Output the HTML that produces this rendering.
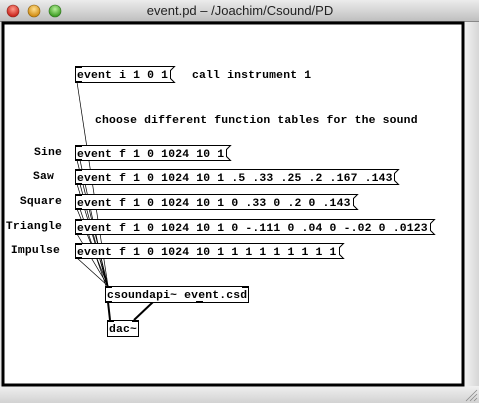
<!DOCTYPE html>
<html><head><style>
html,body{margin:0;padding:0;width:479px;height:403px;overflow:hidden;background:#e4e4e4}
svg{display:block}
.t{font-family:"Liberation Mono",monospace;font-weight:bold;font-size:11.4px;letter-spacing:0.18px;fill:#000}
</style></head><body>
<svg width="479" height="403" xmlns="http://www.w3.org/2000/svg">
<defs>
<linearGradient id="tb" x1="0" y1="0" x2="0" y2="1"><stop offset="0" stop-color="#ececec"/><stop offset="1" stop-color="#bdbdbd"/></linearGradient>
<linearGradient id="rs" x1="0" y1="0" x2="1" y2="0"><stop offset="0" stop-color="#f4f4f4"/><stop offset="1" stop-color="#d6d6d6"/></linearGradient>
<linearGradient id="bb" x1="0" y1="0" x2="0" y2="1"><stop offset="0" stop-color="#f0f0f0"/><stop offset="1" stop-color="#d2d2d2"/></linearGradient>
<radialGradient id="r" cx=".5" cy=".35" r=".6"><stop offset="0" stop-color="#ff9a8a"/><stop offset="1" stop-color="#c8201a"/></radialGradient>
<radialGradient id="y" cx=".5" cy=".35" r=".6"><stop offset="0" stop-color="#ffe090"/><stop offset="1" stop-color="#d08a10"/></radialGradient>
<radialGradient id="g" cx=".5" cy=".35" r=".6"><stop offset="0" stop-color="#b8f09a"/><stop offset="1" stop-color="#3a9a20"/></radialGradient>
</defs>
<rect x="0" y="0" width="479" height="22" fill="url(#tb)"/>
<line x1="0" y1="21.5" x2="479" y2="21.5" stroke="#888"/>
<circle cx="13" cy="11" r="6" fill="url(#r)" stroke="#8a2a20" stroke-width=".6"/>
<circle cx="34" cy="11" r="6" fill="url(#y)" stroke="#8a6010" stroke-width=".6"/>
<circle cx="55" cy="11" r="6" fill="url(#g)" stroke="#307020" stroke-width=".6"/>
<text x="240" y="15" text-anchor="middle" font-family="Liberation Sans,sans-serif" font-size="13" fill="#222">event.pd  – /Joachim/Csound/PD</text>
<rect x="464" y="22" width="15" height="364" fill="url(#rs)"/>
<rect x="0" y="386" width="479" height="17" fill="url(#bb)"/>
<rect x="3" y="23" width="460" height="362" fill="#fff" stroke="#000" stroke-width="3"/>
<g stroke="#000" stroke-width="0.7" fill="none">
<line x1="77" y1="82" x2="108" y2="286"/>
<line x1="77" y1="160" x2="108" y2="286"/>
<line x1="77" y1="184" x2="108" y2="286"/>
<line x1="77" y1="209" x2="108" y2="286"/>
<line x1="77" y1="234" x2="108" y2="286"/>
<line x1="77" y1="258" x2="108" y2="286"/>
<line x1="80" y1="160" x2="107" y2="286"/>
<line x1="80" y1="184" x2="107" y2="286"/>
<line x1="80" y1="209" x2="106" y2="286"/>
</g>
<g stroke="#000" stroke-width="2">
<line x1="108" y1="302" x2="110" y2="320"/>
<line x1="153" y1="302" x2="134" y2="320"/>
</g>
<g stroke="#000" stroke-width="1" fill="#fff">
<path d="M75.5,66.5H174.5L170.5,70.5V78.5L174.5,82.5H75.5Z"/>
<path d="M75.5,145.5H230.5L226.5,149.5V156.5L230.5,160.5H75.5Z"/>
<path d="M75.5,169.5H398.5L394.5,173.5V180.5L398.5,184.5H75.5Z"/>
<path d="M75.5,194.5H357.5L353.5,198.5V205.5L357.5,209.5H75.5Z"/>
<path d="M75.5,219.5H434.5L430.5,223.5V230.5L434.5,234.5H75.5Z"/>
<path d="M75.5,243.5H343.5L339.5,247.5V254.5L343.5,258.5H75.5Z"/>
<rect x="105.5" y="286.5" width="143" height="16"/>
<rect x="107.5" y="320.5" width="31" height="16"/>
</g>
<g fill="#000">
<rect x="75" y="66" width="7" height="2"/><rect x="75" y="81" width="7" height="2"/>
<rect x="75" y="145" width="7" height="2"/><rect x="75" y="159" width="7" height="2"/>
<rect x="75" y="169" width="7" height="2"/><rect x="75" y="183" width="7" height="2"/>
<rect x="75" y="194" width="7" height="2"/><rect x="75" y="208" width="7" height="2"/>
<rect x="75" y="219" width="7" height="2"/><rect x="75" y="233" width="7" height="2"/>
<rect x="75" y="243" width="7" height="2"/><rect x="75" y="257" width="7" height="2"/>
<rect x="105" y="286" width="7" height="2"/><rect x="242" y="286" width="7" height="2"/>
<rect x="105" y="301" width="7" height="2"/><rect x="196" y="301" width="7" height="2"/>
<rect x="107" y="320" width="7" height="2"/><rect x="132" y="320" width="7" height="2"/>
</g>
<g class="t">
<text x="77" y="78">event i 1 0 1</text>
<text x="192" y="78">call instrument 1</text>
<text x="95" y="123">choose different function tables for the sound</text>
<text x="62" y="155" text-anchor="end">Sine</text>
<text x="54" y="179" text-anchor="end">Saw</text>
<text x="62" y="204" text-anchor="end">Square</text>
<text x="62" y="229" text-anchor="end">Triangle</text>
<text x="60" y="253" text-anchor="end">Impulse</text>
<text x="77" y="157">event f 1 0 1024 10 1</text>
<text x="77" y="181">event f 1 0 1024 10 1 .5 .33 .25 .2 .167 .143</text>
<text x="77" y="206">event f 1 0 1024 10 1 0 .33 0 .2 0 .143</text>
<text x="77" y="231">event f 1 0 1024 10 1 0 -.111 0 .04 0 -.02 0 .0123</text>
<text x="77" y="255">event f 1 0 1024 10 1 1 1 1 1 1 1 1 1</text>
<text x="107" y="298">csoundapi~ event.csd</text>
<text x="109" y="332">dac~</text>
</g>
<g stroke="#888" stroke-width="0.8"><line x1="466" y1="401" x2="477" y2="390"/><line x1="470" y1="401" x2="477" y2="394"/><line x1="474" y1="401" x2="477" y2="398"/></g>
</svg>
</body></html>
